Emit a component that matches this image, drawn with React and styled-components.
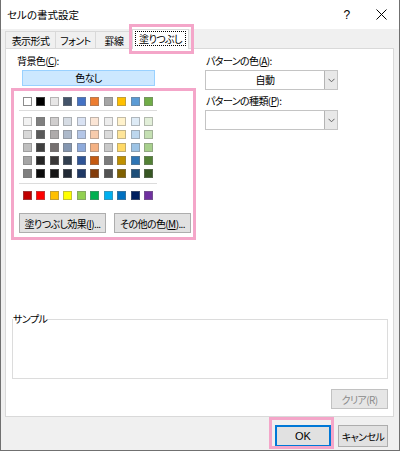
import React from 'react'
import styled, { createGlobalStyle } from 'styled-components'

const GlobalStyle = createGlobalStyle`
  html, body { margin: 0; padding: 0; background: #fff; }
  body {
    font-family: "Noto Sans CJK JP", "Noto Sans", sans-serif;
    font-size: 10px;
    letter-spacing: -0.6px;
    color: #000;
    font-feature-settings: "palt";
  }
  * { box-sizing: border-box; }
`

const PINK = '#f4a6c9'

const theme = [
  ['#FFFFFF', '#000000', '#E7E6E6', '#44546A', '#4472C4', '#ED7D31', '#A5A5A5', '#FFC000', '#5B9BD5', '#70AD47'],
]
const tints = [
  ['#F2F2F2', '#7F7F7F', '#D0CECE', '#D6DCE4', '#D9E2F3', '#FBE5D5', '#EDEDED', '#FFF2CC', '#DEEBF6', '#E2EFD9'],
  ['#D8D8D8', '#595959', '#AEABAB', '#ADB9CA', '#B4C6E7', '#F7CBAC', '#DBDBDB', '#FEE599', '#BDD7EE', '#C5E0B3'],
  ['#BFBFBF', '#3F3F3F', '#757070', '#8496B0', '#8EAADB', '#F4B183', '#C9C9C9', '#FFD965', '#9CC3E5', '#A8D08D'],
  ['#A5A5A5', '#262626', '#3A3838', '#323F4F', '#2F5496', '#C55A11', '#7B7B7B', '#BF9000', '#2E75B5', '#538135'],
  ['#7F7F7F', '#0C0C0C', '#171616', '#222A35', '#1F3864', '#833C0B', '#525252', '#7F6000', '#1E4E79', '#375623'],
]
const standard = [
  ['#C00000', '#FF0000', '#FFC000', '#FFFF00', '#92D050', '#00B050', '#00B0F0', '#0070C0', '#002060', '#7030A0'],
]

const Chevron = () => (
  <svg width="7" height="5" viewBox="0 0 7 5">
    <polyline points="0.5,0.8 3.5,3.8 6.5,0.8" fill="none" stroke="#606060" strokeWidth="1" />
  </svg>
)

const Select = ({ value }) => (
  <Dropdown>
    <DropValue>{value}</DropValue>
    <DropArrow><Chevron /></DropArrow>
  </Dropdown>
)

const Palette = ({ rows }) => (
  <SwatchGrid>
    {rows.flat().map((c, i) => <Swatch key={i} $c={c} />)}
  </SwatchGrid>
)

export default function App() {
  return (
    <>
      <GlobalStyle />
      <Win>
        <TitleBar>
          <Title>セルの書式設定</Title>
          <TitleBtn>?</TitleBtn>
          <TitleBtn>
            <svg width="11" height="11" viewBox="0 0 11 11">
              <line x1="0.5" y1="0.5" x2="10.5" y2="10.5" stroke="#000" strokeWidth="1" />
              <line x1="10.5" y1="0.5" x2="0.5" y2="10.5" stroke="#000" strokeWidth="1" />
            </svg>
          </TitleBtn>
        </TitleBar>

        <TabStrip>
          <Tab $w={51}>表示形式</Tab>
          <Tab $w={41}>フォント</Tab>
          <Tab $w={38}>罫線</Tab>
          <Tab $w={57} $active>
            <Focus>塗りつぶし</Focus>
          </Tab>
        </TabStrip>

        <Panel>
          <Top>
            <LeftCol>
              <Label $pl={6}>背景色(<u>C</u>):</Label>
              <NoColor>色なし</NoColor>
              <PinkBox>
                <Palette rows={theme} />
                <Sep $mt={4} $mb={6} />
                <Palette rows={tints} />
                <Sep $mt={5} $mb={7} />
                <Palette rows={standard} />
                <BtnRow>
                  <Btn $w={87}>塗りつぶし効果(<u>I</u>)...</Btn>
                  <Btn $w={77}>その他の色(<u>M</u>)...</Btn>
                </BtnRow>
              </PinkBox>
            </LeftCol>
            <RightCol>
              <Label $pl={1}>パターンの色(<u>A</u>):</Label>
              <Select value="自動" />
              <Label $pl={1} $mt={3}>パターンの種類(<u>P</u>):</Label>
              <Select value="" />
            </RightCol>
          </Top>

          <Sample>
            <legend>サンプル</legend>
          </Sample>
          <ClearBtn>クリア(R)</ClearBtn>
        </Panel>

        <Footer>
          <OkBtn>OK</OkBtn>
          <Btn $w={50} $h={22}>キャンセル</Btn>
        </Footer>
      </Win>
    </>
  )
}

const Win = styled.div`
  width: 400px;
  height: 451px;
  display: flex;
  flex-direction: column;
  background: #f0f0f0;
  border: 1px solid #707070;
  border-top: none;
`

const TitleBar = styled.div`
  height: 29px;
  background: #fff;
  display: flex;
  align-items: center;
  padding-left: 6px;
`

const Title = styled.div`
  flex: 1;
  font-size: 10.5px;
  letter-spacing: 0;
`

const TitleBtn = styled.div`
  width: 35px;
  height: 29px;
  display: flex;
  align-items: center;
  justify-content: center;
  font-size: 12px;
  font-family: "Liberation Sans", sans-serif;
`

const TabStrip = styled.div`
  height: 19px;
  display: flex;
  align-items: flex-end;
  padding-left: 4px;
  position: relative;
  z-index: 2;
`

const Tab = styled.div`
  width: ${p => p.$w}px;
  height: ${p => (p.$active ? 20 : 17)}px;
  margin-right: -1px;
  margin-bottom: ${p => (p.$active ? -1 : 0)}px;
  display: flex;
  align-items: center;
  justify-content: center;
  background: ${p => (p.$active ? '#fff' : '#f0f0f0')};
  border: 1px solid #d9d9d9;
  border-bottom: none;
  position: relative;
  padding-bottom: ${p => (p.$active ? 2 : 0)}px;

  ${p => p.$active && `
    &::after {
      content: '';
      position: absolute;
      top: -6px;
      left: -4px;
      right: -6px;
      bottom: -5px;
      border: 3px solid ${PINK};
    }
  `}
`

const Focus = styled.span`
  border: 1px dotted #000;
  padding: 0 3px;
  line-height: 13px;
`

const Panel = styled.div`
  flex: 1;
  margin: 0 5px 0 4px;
  background: #fff;
  border: 1px solid #d9d9d9;
  display: flex;
  flex-direction: column;
  padding: 4px 5px 7px 5px;
`

const Top = styled.div`
  display: flex;
`

const LeftCol = styled.div`
  width: 185px;
  display: flex;
  flex-direction: column;
`

const RightCol = styled.div`
  margin-left: 9px;
  display: flex;
  flex-direction: column;
`

const Label = styled.div`
  height: 16px;
  line-height: 16px;
  padding-left: ${p => p.$pl || 0}px;
  margin-top: ${p => p.$mt || 0}px;
  u { text-decoration: underline; }
`

const NoColor = styled.div`
  margin: 1px 0 0 11px;
  width: 133px;
  height: 16px;
  line-height: 14px;
  text-align: center;
  background: #cce8ff;
  border: 1px solid #99d1ff;
`

const PinkBox = styled.div`
  margin-top: 2px;
  border: 3px solid ${PINK};
  padding: 6px 0 4px;
`

const SwatchGrid = styled.div`
  display: grid;
  grid-template-columns: repeat(10, 9px);
  column-gap: 4.5px;
  row-gap: 4px;
  margin-left: 8.5px;
`

const Swatch = styled.div`
  width: 9px;
  height: 9px;
  background: ${p => p.$c};
  border: 1px solid ${p => (p.$c === '#FFFFFF' ? '#8c8c8c' : 'rgba(120,120,120,0.45)')};
`

const Sep = styled.div`
  height: 1px;
  width: 138px;
  background: #dcdcdc;
  margin: ${p => p.$mt}px 0 ${p => p.$mb}px 5px;
`

const BtnRow = styled.div`
  display: flex;
  gap: 8px;
  margin-top: 13px;
  padding-left: 5px;
`

const Btn = styled.div`
  width: ${p => p.$w}px;
  height: ${p => p.$h || 20}px;
  display: flex;
  align-items: center;
  justify-content: center;
  background: #e1e1e1;
  border: 1px solid #adadad;
  white-space: nowrap;
  u { text-decoration: underline; }
`

const Dropdown = styled.div`
  margin-top: 1px;
  width: 133px;
  height: 20px;
  display: flex;
  background: #fff;
  border: 1px solid #c4c4c4;
`

const DropValue = styled.div`
  flex: 1;
  text-align: center;
  line-height: 18px;
`

const DropArrow = styled.div`
  width: 13px;
  display: flex;
  align-items: center;
  justify-content: center;
  background: #e8e8e8;
  border-left: 1px solid #b4b4b4;
`

const Sample = styled.fieldset`
  margin: auto 0 0 1px;
  padding: 0;
  width: 376px;
  height: 67px;
  border: 1px solid #dcdcdc;

  legend {
    padding: 0;
    margin-left: 0;
    line-height: 14px;
  }
`

const ClearBtn = styled(Btn)`
  align-self: flex-end;
  width: 57px;
  margin-top: 10px;
  color: #8a8a8a;
  background: #e6e6e6;
  border-color: #c2c2c2;
`

const Footer = styled.div`
  height: 33px;
  display: flex;
  justify-content: flex-end;
  align-items: flex-start;
  gap: 7px;
  padding: 8px 11px 0 0;
`

const OkBtn = styled.div`
  position: relative;
  width: 56px;
  height: 22px;
  display: flex;
  align-items: center;
  justify-content: center;
  font-family: "Liberation Sans", sans-serif;
  font-size: 11px;
  letter-spacing: 0;
  background: #e1e1e1;
  border: 1px solid #0078d7;
  box-shadow: inset 0 0 0 1px #0078d7;

  &::after {
    content: '';
    position: absolute;
    top: -9px;
    left: -7px;
    right: -4px;
    bottom: -3px;
    border: 3px solid ${PINK};
  }
`
